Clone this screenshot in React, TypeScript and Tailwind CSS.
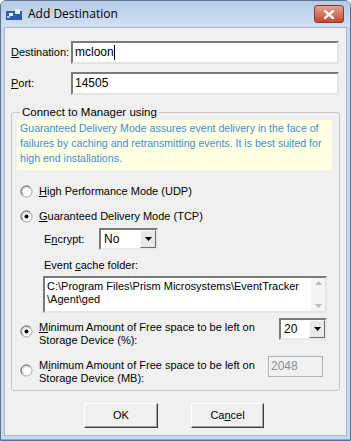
import React from 'react';

// ========================================================================
// Small win32-ish widgets

const Radio: React.FC<{ checked?: boolean }> = ({ checked }) => (
  <svg width="13" height="13" viewBox="0 0 13 13" className="shrink-0">
    <circle cx="6.5" cy="6.5" r="5.5" fill="#ffffff" stroke="#a0a0a0" />
    <path d="M2.6 10.4 A5.5 5.5 0 0 1 10.4 2.6" fill="none" stroke="#707070" strokeWidth="1" />
    <path d="M3.4 9.6 A4.4 4.4 0 0 1 9.6 3.4" fill="none" stroke="#c8c8c8" strokeWidth="1" />
    {checked && <circle cx="6.5" cy="6.5" r="2" fill="#000000" />}
  </svg>
);

const DropArrow = () => (
  <div className="w-[16px] h-full bg-[#e8e8e8] border-t border-l border-white border-r border-b border-r-[#6d6d6d] border-b-[#6d6d6d] flex items-center justify-center">
    <svg width="7" height="4" viewBox="0 0 7 4">
      <path d="M0 0 H7 L3.5 4 Z" fill="#000" />
    </svg>
  </div>
);

const Combo: React.FC<{ value: string; width: string }> = ({ value, width }) => (
  <div className={`${width} h-[22px] shrink-0 bg-white border-2 border-t-[#7a7a7a] border-l-[#7a7a7a] border-r-[#e8e8e8] border-b-[#e8e8e8] flex items-stretch`}>
    <div className="flex-1 pl-[3px] flex items-center text-[12px] text-black">{value}</div>
    <DropArrow />
  </div>
);

// ========================================================================
// Dialog

export default function App() {
  return (
    <div
      className="w-[351px] h-[441px] flex flex-col bg-[#c6d7ee] border border-[#5d7290] rounded-t-[6px] overflow-hidden"
      style={{ fontFamily: '"Liberation Sans", Arial, sans-serif' }}
    >
      {/* Title bar */}
      <div className="h-[26px] shrink-0 flex items-center bg-gradient-to-b from-[#b7cbe6] to-[#d2e0f2] px-[5px]">
        <svg width="16" height="12" viewBox="0 0 16 12" className="mr-[6px]">
          <rect x="0" y="3" width="16" height="9" fill="#2b5db5" />
          <rect x="3" y="5" width="4" height="3" fill="#ffffff" />
          <rect x="9" y="1" width="5" height="5" fill="#e6eefb" />
          <rect x="1" y="8" width="3" height="2" fill="#9ec0ef" />
        </svg>
        <span className="text-[12px] text-black" style={{ fontFamily: '"Open Sans", "Liberation Sans", sans-serif' }}>
          Add Destination
        </span>
        <div className="ml-auto mr-[1px] w-[30px] h-[18px] rounded-[3px] border border-[#8a3a2c] bg-gradient-to-b from-[#e6a290] to-[#c2462b] flex items-center justify-center">
          <svg width="10" height="9" viewBox="0 0 10 9">
            <path d="M1 1 L9 8 M9 1 L1 8" stroke="#ffffff" strokeWidth="2.4" strokeLinecap="square" />
          </svg>
        </div>
      </div>

      {/* Client area */}
      <div className="flex-1 mx-[3px] bg-[#f0f0f0] border border-[#a9b8cc] flex flex-col text-[11px] leading-[13px] text-black">
        {/* Destination / Port */}
        <div className="flex items-center mt-[13px] pl-[6px]">
          <span className="w-[60px]"><u>D</u>estination:</span>
          <div className="w-[268px] h-[23px] bg-white border-2 border-t-[#7a7a7a] border-l-[#7a7a7a] border-r-[#e4e4e4] border-b-[#e4e4e4] pl-[2px] flex items-center text-[12px]">
            mcloon<span className="w-px h-[15px] bg-black" />
          </div>
        </div>
        <div className="flex items-center mt-[8px] pl-[6px]">
          <span className="w-[60px]"><u>P</u>ort:</span>
          <div className="w-[268px] h-[23px] bg-white border-2 border-t-[#7a7a7a] border-l-[#7a7a7a] border-r-[#e4e4e4] border-b-[#e4e4e4] pl-[2px] flex items-center text-[12px]">
            14505
          </div>
        </div>

        {/* Group box */}
        <fieldset className="mt-[10px] ml-[6px] w-[329px] h-[286px] border border-[#c6c6c6] rounded-[3px] px-[5px] pb-0">
          <legend className="ml-[3px] px-[2px] text-[11.5px] leading-[14px]">Connect to Manager using</legend>

          <div className="mt-[1px] bg-[#ffffe4] text-[#3b8fd9] text-[10.6px] leading-[15px] pl-[3px] pt-[1px] pb-[4px] w-[315px] whitespace-nowrap">
            Guaranteed Delivery Mode assures event delivery in the face of
            <br />
            failures by caching and retransmitting events. It is best suited for
            <br />
            high end installations.
          </div>

          <div className="flex items-center gap-[6px] mt-[15px] ml-[3px]">
            <Radio />
            <span><u>H</u>igh Performance Mode (UDP)</span>
          </div>
          <div className="flex items-center gap-[6px] mt-[12px] ml-[3px]">
            <Radio checked />
            <span><u>G</u>uaranteed Delivery Mode (TCP)</span>
          </div>

          <div className="flex items-center mt-[5px] ml-[27px]">
            <span className="w-[55px]">E<u>n</u>crypt:</span>
            <Combo value="No" width="w-[59px]" />
          </div>

          <div className="mt-[9px] ml-[27px]">Event <u>c</u>ache folder:</div>
          <div className="mt-[4px] ml-[26px] w-[284px] h-[37px] bg-white border-2 border-t-[#7a7a7a] border-l-[#7a7a7a] border-r-[#e4e4e4] border-b-[#e4e4e4] flex">
            <div className="flex-1 pl-[2px] pt-[2px] leading-[13px] whitespace-nowrap">
              C:\Program Files\Prism Microsystems\EventTracker
              <br />
              \Agent\ged
            </div>
            <div className="w-[14px] bg-[#f4f4f4] flex flex-col justify-between items-center py-[3px]">
              <svg width="7" height="4" viewBox="0 0 7 4"><path d="M0 4 H7 L3.5 0 Z" fill="#b8b8b8" /></svg>
              <svg width="7" height="4" viewBox="0 0 7 4"><path d="M0 0 H7 L3.5 4 Z" fill="#b8b8b8" /></svg>
            </div>
          </div>

          <div className="flex items-start mt-[5px] ml-[3px] mr-[7px]">
            <div className="mt-[7px]"><Radio checked /></div>
            <div className="ml-[6px] flex-1 pt-[3px] leading-[13px] whitespace-nowrap">
              <u>M</u>inimum Amount of Free space to be left on
              <br />
              Storage Device (%):
            </div>
            <Combo value="20" width="w-[48px]" />
          </div>

          <div className="flex items-start mt-[9px] ml-[3px] mr-[11px]">
            <div className="mt-[8px]"><Radio /></div>
            <div className="ml-[6px] flex-1 pt-[3px] leading-[13px] whitespace-nowrap">
              M<u>i</u>nimum Amount of Free space to be left on
              <br />
              Storage Device (MB):
            </div>
            <div className="w-[55px] h-[21px] shrink-0 border border-[#b4b4b4] bg-[#f0f0f0] pl-[2px] flex items-center text-[12px] text-[#8d8d8d]">
              2048
            </div>
          </div>
        </fieldset>

        {/* Buttons */}
        <div className="flex justify-center gap-[33px] mt-[12px] pr-[3px]">
          <button className="w-[74px] h-[25px] bg-[#f0f0f0] border border-t-white border-l-white border-r-[#404040] border-b-[#404040] shadow-[inset_-1px_-1px_0_#a0a0a0]">
            OK
          </button>
          <button className="w-[73px] h-[25px] bg-[#f0f0f0] border border-t-white border-l-white border-r-[#404040] border-b-[#404040] shadow-[inset_-1px_-1px_0_#a0a0a0]">
            Ca<u>n</u>cel
          </button>
        </div>
      </div>

      {/* Bottom frame */}
      <div className="h-[4px] shrink-0 border-b border-[#5fbfdc]" />
    </div>
  );
}
